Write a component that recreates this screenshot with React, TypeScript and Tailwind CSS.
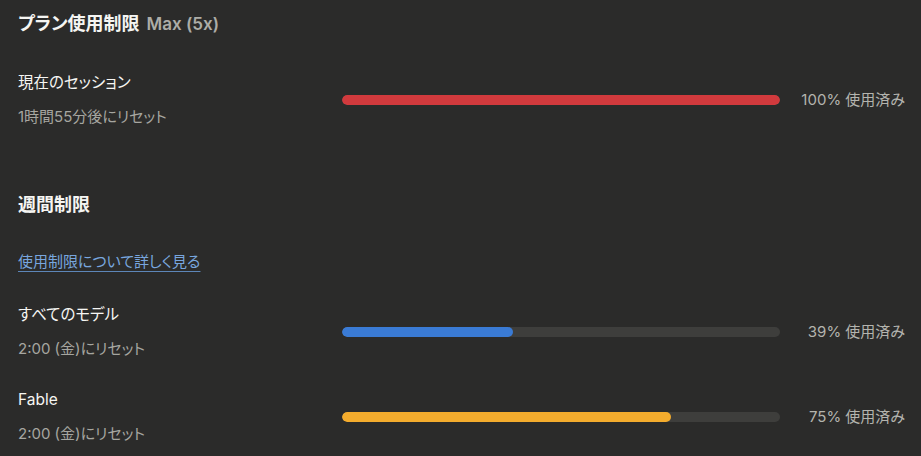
const font = "font-['Inter','Noto_Sans_CJK_JP',sans-serif] [font-feature-settings:'palt']";

interface Limit {
    id: string;
    label: string;
    reset: string;
    percent: number;
    barColor: string;
}

const session: Limit = {
    id: 'session',
    label: '現在のセッション',
    reset: '1時間55分後にリセット',
    percent: 100,
    barColor: 'bg-[#d13a3d]',
};

const weekly: Limit[] = [
    {
        id: 'all',
        label: 'すべてのモデル',
        reset: '2:00 (金)にリセット',
        percent: 39,
        barColor: 'bg-[#3a7bd5]',
    },
    {
        id: 'fable',
        label: 'Fable',
        reset: '2:00 (金)にリセット',
        percent: 75,
        barColor: 'bg-[#f4ac2d]',
    },
];

function LimitRow({ limit }: { limit: Limit }) {
    return (
        <div className="grid grid-cols-[324px_438px_1fr] items-center">
            <div>
                <div className="text-[15.5px] leading-[20px] text-[#f6f6f3]">{limit.label}</div>
                <div className="mt-[14px] text-[15px] leading-[20px] text-[#a6a6a0]">{limit.reset}</div>
            </div>
            {/* progress track */}
            <div className="h-[10px] rounded-full bg-[#3e3e3c] overflow-hidden">
                <div className={`h-full rounded-full ${limit.barColor}`} style={{ width: `${limit.percent}%` }} />
            </div>
            <div className="text-right text-[15px] leading-[20px] text-[#b4b4ae]">
                {limit.percent}% 使用済み
            </div>
        </div>
    );
}

export default function App() {
    return (
        <div className={`w-[921px] h-[456px] overflow-hidden bg-[#2b2b2a] pl-[18px] pr-[16px] pt-[13px] ${font}`}>
            {/* Header */}
            <div className="flex items-baseline gap-[7px]">
                <h1 className="text-[18px] leading-[22px] font-bold text-[#f5f5f2]">プラン使用制限</h1>
                <span className="text-[17px] leading-[22px] font-semibold text-[#adada7]">Max (5x)</span>
            </div>

            <div className="mt-[38px]">
                <LimitRow limit={session} />
            </div>

            {/* Weekly limits */}
            <h2 className="mt-[67px] text-[18px] leading-[22px] font-bold text-[#f5f5f2]">週間制限</h2>
            <a className="mt-[36px] inline-block text-[15px] leading-[20px] text-[#78a6de] underline underline-offset-4 decoration-[#5d86b8]">
                使用制限について詳しく見る
            </a>

            <div className="mt-[32px] flex flex-col gap-[31px]">
                {weekly.map((limit) => (
                    <LimitRow key={limit.id} limit={limit} />
                ))}
            </div>
        </div>
    );
}
